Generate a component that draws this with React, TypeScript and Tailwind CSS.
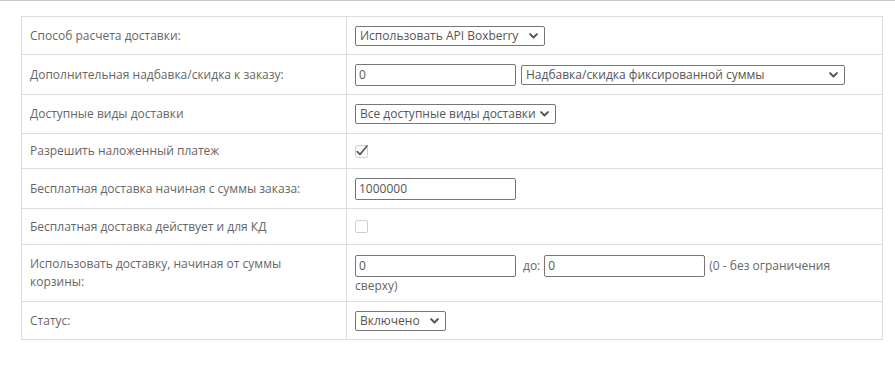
import React from "react";

const Chevron = () => (
  <svg width="9" height="6" viewBox="0 0 9 6" className="shrink-0">
    <path d="M1.1 1.1 L4.5 4.5 L7.9 1.1" fill="none" stroke="#555" strokeWidth="2" strokeLinecap="round" strokeLinejoin="round" />
  </svg>
);

const Select = ({ text, w }: { text: string; w: string }) => (
  <div className={`inline-flex h-[20px] items-center justify-between gap-[3px] rounded-[2px] border border-[#767676] bg-white pl-[4px] pr-[6px] align-middle text-[12px] text-[#555] ${w}`}>
    <span className="whitespace-nowrap leading-[18px]">{text}</span>
    <Chevron />
  </div>
);

const Input = ({ value, w = "w-[161px]" }: { value: string; w?: string }) => (
  <input
    type="text"
    defaultValue={value}
    className={`inline-block h-[22px] rounded-[2px] border border-[#767676] bg-white px-[3px] align-middle text-[12px] text-[#555] outline-none ${w}`}
    style={{ fontFamily: "'Open Sans', sans-serif" }}
  />
);

const Row = ({ label, h, children, last = false }: { label: React.ReactNode; h: string; children?: React.ReactNode; last?: boolean }) => (
  <div className={`grid grid-cols-[325px_1fr] ${h} ${last ? "" : "border-b border-[#dddddd]"}`}>
    <div className="flex items-center border-r border-[#dddddd] pl-[8px] pr-2 leading-[18px] text-[#666]">{label}</div>
    <div className="flex items-center pl-[8px] pr-2">{children}</div>
  </div>
);

export default function App() {
  return (
    <div className="min-h-[367px] w-[895px] bg-white text-[12px]" style={{ fontFamily: "'Open Sans', sans-serif" }}>
      <div className="h-px w-full bg-[#c8c8c8]" />
      <div className="pl-[21px] pt-[15px]">
        <div className="w-[862px] border border-[#dddddd]">
          <Row label="Способ расчета доставки:" h="h-[38px]">
            <Select text="Использовать API Boxberry" w="w-[190px]" />
          </Row>
          <Row label="Дополнительная надбавка/скидка к заказу:" h="h-[40px]">
            <div className="flex items-center gap-[5px]">
              <Input value="0" />
              <Select text="Надбавка/скидка фиксированной суммы" w="w-[324px]" />
            </div>
          </Row>
          <Row label="Доступные виды доставки" h="h-[39px]">
            <Select text="Все доступные виды доставки" w="w-[201px]" />
          </Row>
          <Row label="Разрешить наложенный платеж" h="h-[35px]">
            <svg width="14" height="15" viewBox="0 0 14 15" className="-mt-[1px]">
              <rect x="0.5" y="2.5" width="12" height="12" rx="2" fill="#fbfbfb" stroke="#cfcfcf" />
              <path d="M2.3 8.6 L5 11.4 L12 3" fill="none" stroke="#5a5a5a" strokeWidth="1.7" strokeLinecap="round" strokeLinejoin="round" />
            </svg>
          </Row>
          <Row label="Бесплатная доставка начиная с суммы заказа:" h="h-[40px]">
            <Input value="1000000" />
          </Row>
          <Row label="Бесплатная доставка действует и для КД" h="h-[36px]">
            <div className="h-[13px] w-[13px] rounded-[2px] border border-[#cfcfcf] bg-white" />
          </Row>
          <Row
            label={
              <span>
                Использовать доставку, начиная от суммы
                <br />
                корзины:
              </span>
            }
            h="h-[57px]"
          >
            <div className="pt-[3px] leading-[18px] text-[#666]">
              <Input value="0" />
              <span className="ml-[7px] mr-[4px] align-middle">до:</span>
              <Input value="0" />
              <span className="ml-[4px] align-middle">(0 - без ограничения </span>
              <span>сверху)</span>
            </div>
          </Row>
          <Row label="Статус:" h="h-[37px]" last>
            <Select text="Включено" w="w-[91px]" />
          </Row>
        </div>
      </div>
    </div>
  );
}
